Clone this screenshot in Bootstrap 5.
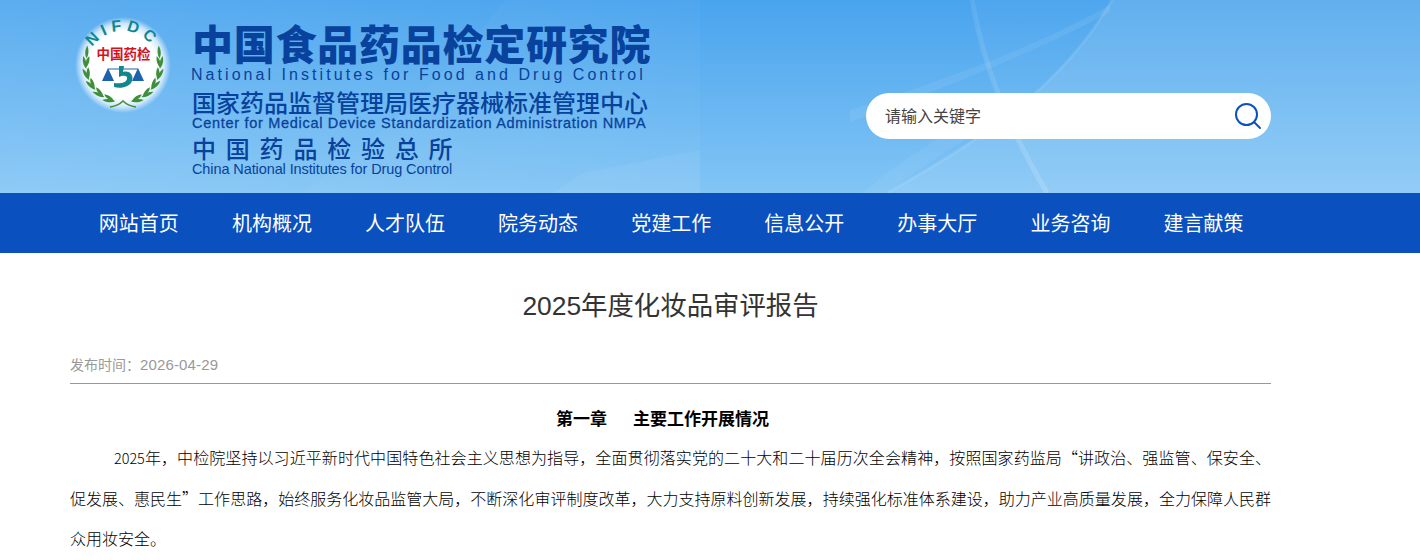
<!DOCTYPE html>
<html lang="zh-CN">
<head>
    <meta charset="UTF-8">
    <title>2025年度化妆品审评报告</title>
    <link href="https://cdn.jsdelivr.net/npm/bootstrap@5.3.3/dist/css/bootstrap.min.css" rel="stylesheet">
    <style>
        body { font-family: "Liberation Sans", "Noto Sans CJK SC", sans-serif; background: #fff; overflow: hidden; }
        .wrap-main { width: 1201px; margin-left: 70px; }
        .site-top { height: 193px; position: relative; overflow: hidden; background: linear-gradient(180deg, #49a4ee 0%, #82c5f5 100%); }
        .top-art { position: absolute; left: 0; top: 0; }
        .top-inner { position: relative; height: 193px; }
        .logo-mark { width: 100px; height: 100px; margin: 15px 0 0 4px; flex: none; }
        .logo-words { margin: 26px 0 0 18px; color: #08429c; line-height: 1; white-space: nowrap; }
        .cn-big { font-size: 41px; font-weight: 900; letter-spacing: .75px; height: 41px; }
        .en-big { font-size: 16px; letter-spacing: 3.05px; height: 25px; margin-left: -1px; }
        .cn-mid { font-size: 24px; font-weight: 500; height: 24px; }
        .en-mid { font-size: 14.5px; letter-spacing: .7px; height: 20px; -webkit-text-stroke: .3px #08429c; }
        .cn-sub { font-size: 24px; font-weight: 500; letter-spacing: 9.8px; height: 24px; margin-top: 2px; }
        .en-sub { font-size: 14.5px; letter-spacing: -.1px; }
        .search-pill { position: absolute; left: 796px; top: 93px; width: 405px; height: 46px; background: #fff; border-radius: 23px; padding: 0 9px 0 19px; }
        .search-pill input { border: 0; outline: 0; flex: 1; padding: 2px 0 0; font-size: 16px; background: transparent; }
        .search-pill input::placeholder { color: #444; opacity: 1; }
        .site-nav { height: 60px; background: #0b50bf; }
        .site-nav a { color: #fff; font-size: 20px; text-decoration: none; width: 133.1px; line-height: 60px; padding-top: 1px; flex: none; }
        .nav-row { padding-left: 28.8px; }
        .art-title { font-size: 26.4px; color: #333; text-align: center; line-height: 36px; margin: 35px 0 0; font-weight: 400; }
        .art-date { font-size: 14px; color: #999; line-height: 20px; margin-top: 31px; padding-bottom: 8px; border-bottom: 1px solid #999; }
        .art-num { font-size: 15px; letter-spacing: .15px; }
        .art-body { font-size: 16px; line-height: 40px; color: #000; font-family: "Noto Sans CJK SC", sans-serif; font-weight: 300; }
        .art-body p { margin: 0; }
        .art-head { text-align: center; font-size: 17px; font-weight: 700; margin-top: 14px !important; padding-right: 16px; }
        .art-gap { display: inline-block; width: 26px; }
        .art-para { text-indent: 44px; text-align: justify; margin-top: -1px !important; }
        .art-digit { font-size: 14.4px; }
    </style>
</head>
<body>
    <!-- 顶部 -->
    <div class="site-top">
        <svg class="top-art" width="1420" height="193" viewBox="0 0 1420 193">
            <defs>
                <linearGradient id="leftTint" x1="0" x2="1" y1="0" y2="0">
                    <stop offset="0" stop-color="#fff" stop-opacity=".1"/>
                    <stop offset="1" stop-color="#fff" stop-opacity="0"/>
                </linearGradient>
                <linearGradient id="edgeTint" x1="0" x2="0" y1="0" y2="1">
                    <stop offset="0" stop-color="#fff" stop-opacity=".08"/>
                    <stop offset="1" stop-color="#fff" stop-opacity=".16"/>
                </linearGradient>
            </defs>
            <rect width="700" height="193" fill="url(#leftTint)"/>
            <!-- 左侧淡色弧带 -->
            <path d="M303 193 C390 130 460 60 505 0 L700 0 L700 193 Z" fill="#fff" opacity=".03"/>
            <path d="M553 193 L583 173 L700 150 L700 193 Z" fill="#fff" opacity=".06"/>
            <!-- 右侧交叉弧线 -->
            <path d="M850 110 C930 85 1030 50 1110 5 L1110 12 C1040 50 940 90 850 122 Z" fill="#fff" opacity=".07"/>
            <path d="M972 0 C984 70 1010 130 1047 193 L1420 193 L1420 0 Z" fill="#fff" opacity=".03"/>
            <path d="M1112 0 C1060 90 980 140 887 193 L1420 193 L1420 0 Z" fill="#fff" opacity=".11"/>
            <path d="M863 193 C910 150 960 125 1033 93 L1040 96 C980 130 930 160 887 193 Z" fill="#fff" opacity=".06"/>
            <path d="M972 0 C984 70 1010 130 1047 193" fill="none" stroke="url(#edgeTint)" stroke-width="5"/>
            <path d="M887 193 C980 140 1060 90 1112 0" fill="none" stroke="#fff" stroke-opacity=".1" stroke-width="3"/>
        </svg>
        <div class="wrap-main top-inner d-flex">
            <svg class="logo-mark" viewBox="0 0 100 100">
                <defs>
                    <radialGradient id="glow"><stop offset="70%" stop-color="#fff"/><stop offset="86%" stop-color="#fff" stop-opacity=".7"/><stop offset="100%" stop-color="#fff" stop-opacity="0"/></radialGradient>
                    <path id="arc" d="M12.5 52 A36 36 0 0 1 84.5 52"/>
                    <path id="leafOut" d="M49 87 C45 90 40 90 36 88.5 C40 86 45 85.5 49 87 Z"/>
                    <path id="leafIn" d="M49 87 C46 84 42 82.5 38 83 C40 86.5 45 88 49 87 Z"/>
                    <g id="halfWreath" fill="#3f8f3a">
                        <use href="#leafOut" transform="rotate(12 49 50)"/>
                        <use href="#leafIn" transform="rotate(14 49 50)"/>
                        <use href="#leafOut" transform="rotate(30 49 50)"/>
                        <use href="#leafIn" transform="rotate(32 49 50)"/>
                        <use href="#leafOut" transform="rotate(48 49 50)"/>
                        <use href="#leafIn" transform="rotate(50 49 50)"/>
                        <use href="#leafOut" transform="rotate(66 49 50)"/>
                        <use href="#leafIn" transform="rotate(68 49 50)"/>
                        <use href="#leafOut" transform="rotate(84 49 50)"/>
                        <use href="#leafIn" transform="rotate(86 49 50)"/>
                        <use href="#leafOut" transform="rotate(100 49 50)"/>
                    </g>
                </defs>
                <circle cx="49" cy="50" r="48" fill="url(#glow)"/>
                <text font-family="Liberation Sans" font-size="16" font-weight="700" fill="#12868f" letter-spacing="4.5" text-anchor="middle"><textPath href="#arc" startOffset="50%">NIFDC</textPath></text>
                <text x="49.5" y="44" text-anchor="middle" font-family="Noto Sans CJK SC" font-size="13.5" font-weight="700" fill="#d4131f">中国药检</text>
                <path d="M34 54 H64" stroke="#1d62ad" stroke-width="1"/>
                <path d="M28 66 L34 53 L40 66 Z M58 66 L64 53 L70 66 Z" fill="#1d62ad"/>
                <path d="M45 51 H50 L49 57 C56 55 60 61 58 66 C56 72 47 74 40 72 L40 68 C46 69 52 68 53 64 C54 60 49 60 45 62 Z" fill="#12868f"/>
                <use href="#halfWreath"/>
                <use href="#halfWreath" transform="translate(98 0) scale(-1 1)"/>
                <path d="M36 92 C42 91 46 89 49 86 C52 89 56 91 62 92" fill="none" stroke="#3f8f3a" stroke-width="1.6"/>
            </svg>
            <div class="logo-words">
                <div class="cn-big">中国食品药品检定研究院</div>
                <div class="en-big">National Institutes for Food and Drug Control</div>
                <div class="cn-mid">国家药品监督管理局医疗器械标准管理中心</div>
                <div class="en-mid">Center for Medical Device Standardization Administration NMPA</div>
                <div class="cn-sub">中国药品检验总所</div>
                <div class="en-sub">China National Institutes for Drug Control</div>
            </div>
            <div class="search-pill d-flex align-items-center">
                <input type="text" placeholder="请输入关键字">
                <svg width="28" height="28" viewBox="0 0 28 28" fill="none" stroke="#0b50bf" stroke-width="2">
                    <circle cx="12.5" cy="12.5" r="10.5"/>
                    <path d="M20 20 L26 26" stroke-linecap="round"/>
                </svg>
            </div>
        </div>
    </div>

    <!-- 导航 -->
    <nav class="site-nav">
        <div class="wrap-main nav-row d-flex">
            <a href="#">网站首页</a>
            <a href="#">机构概况</a>
            <a href="#">人才队伍</a>
            <a href="#">院务动态</a>
            <a href="#">党建工作</a>
            <a href="#">信息公开</a>
            <a href="#">办事大厅</a>
            <a href="#">业务咨询</a>
            <a href="#">建言献策</a>
        </div>
    </nav>

    <!-- 正文 -->
    <div class="wrap-main">
        <h1 class="art-title">2025年度化妆品审评报告</h1>
        <div class="art-date">发布时间：<span class="art-num">2026-04-29</span></div>
        <div class="art-body">
            <p class="art-head">第一章<span class="art-gap"></span>主要工作开展情况</p>
            <p class="art-para"><span class="art-digit">2025</span>年，中检院坚持以习近平新时代中国特色社会主义思想为指导，全面贯彻落实党的二十大和二十届历次全会精神，按照国家药监局“讲政治、强监管、保安全、促发展、惠民生”工作思路，始终服务化妆品监管大局，不断深化审评制度改革，大力支持原料创新发展，持续强化标准体系建设，助力产业高质量发展，全力保障人民群众用妆安全。</p>
        </div>
    </div>

    <script src="https://cdn.jsdelivr.net/npm/bootstrap@5.3.3/dist/js/bootstrap.bundle.min.js"></script>
</body>
</html>
